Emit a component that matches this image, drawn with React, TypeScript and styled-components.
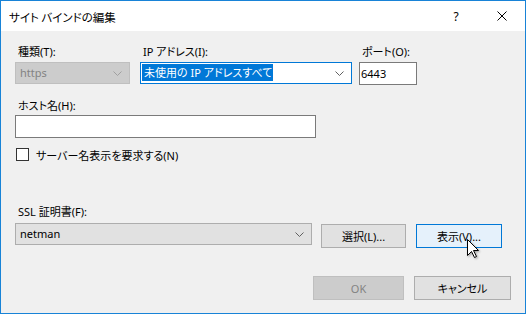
import * as React from "react";
import styled, { createGlobalStyle } from "styled-components";

const GlobalStyle = createGlobalStyle`
	html, body {
		margin: 0;
		padding: 0;
		background: #ffffff;
	}
	body {
		font-family: "Noto Sans", "Noto Sans CJK JP", sans-serif;
		font-size: 11px;
		color: #000;
	}
`;

const Window = styled.div`
	box-sizing: border-box;
	width: 526px;
	height: 314px;
	border: 1px solid #1883d7;
	display: flex;
	flex-direction: column;
	background: #f0f0f0;
`;

const TitleBar = styled.div`
	height: 30px;
	flex: none;
	display: flex;
	align-items: center;
	background: #ffffff;
	padding-left: 8px;
`;

const Title = styled.div`
	flex: 1;
	font-family: "Noto Sans CJK JP", sans-serif;
	font-feature-settings: "palt";
	font-size: 11.5px;
	line-height: 16px;
	padding-top: 1px;
`;

const TitleButton = styled.div`
	width: 46px;
	height: 30px;
	display: flex;
	align-items: center;
	justify-content: center;
	font-family: "Noto Sans", sans-serif;
	font-size: 12px;
`;

const Body = styled.div`
	flex: 1;
	padding: 13px 14px 0 14px;
	display: flex;
	flex-direction: column;
	font-family: "Noto Sans", "Noto Sans CJK JP", sans-serif;
	font-feature-settings: "palt";
	font-size: 11px;
`;

const Row = styled.div<{ $top?: number; $align?: string; $justify?: string; $h?: number }>`
	display: flex;
	margin-top: ${(p) => p.$top || 0}px;
	align-items: ${(p) => p.$align || "flex-start"};
	justify-content: ${(p) => p.$justify || "flex-start"};
	${(p) => (p.$h ? `height: ${p.$h}px;` : "")}
`;

const Field = styled.div<{ $w: number; $mr?: number }>`
	width: ${(p) => p.$w}px;
	margin-right: ${(p) => p.$mr || 0}px;
	display: flex;
	flex-direction: column;
`;

const Label = styled.label<{ $gap?: number }>`
	display: block;
	height: 16px;
	line-height: 16px;
	padding-left: 3px;
	margin-bottom: ${(p) => (p.$gap === undefined ? 2 : p.$gap)}px;
	white-space: nowrap;
`;

const Combo = styled.div<{ $variant?: "disabled" | "focus" | "normal" }>`
	box-sizing: border-box;
	height: 22px;
	display: flex;
	align-items: center;
	padding: 0 7px 0 4px;
	border: 1px solid
		${(p) => (p.$variant === "disabled" ? "#bfbfbf" : p.$variant === "focus" ? "#0078d7" : "#adadad")};
	background: ${(p) => (p.$variant === "disabled" ? "#cccccc" : p.$variant === "focus" ? "#ffffff" : "#e1e1e1")};
	color: ${(p) => (p.$variant === "disabled" ? "#838383" : "#000")};
	${(p) => (p.$variant === "focus" ? "padding-left: 1px;" : "")}
`;

const ComboText = styled.span`
	flex: 1;
	line-height: 16px;
	white-space: nowrap;
`;

const Selected = styled.span`
	background: #0078d7;
	color: #ffffff;
	padding: 1px 1px 1px 2px;
	line-height: 16px;
`;

const TextBox = styled.div<{ $h?: number }>`
	box-sizing: border-box;
	height: ${(p) => p.$h || 23}px;
	border: 1px solid #7a7a7a;
	background: #ffffff;
	padding-left: 1px;
	line-height: ${(p) => (p.$h || 23) - 2}px;
`;

const CheckBox = styled.span`
	box-sizing: border-box;
	width: 13px;
	height: 13px;
	border: 1px solid #333333;
	background: #ffffff;
	margin-left: 1px;
	margin-right: 7px;
`;

const Button = styled.div<{ $w: number; $variant?: "default" | "hot" | "disabled"; $ml?: number; $top?: number }>`
	box-sizing: border-box;
	position: relative;
	width: ${(p) => p.$w}px;
	height: 24px;
	margin-left: ${(p) => p.$ml || 0}px;
	margin-top: ${(p) => p.$top || 0}px;
	display: flex;
	align-items: center;
	justify-content: center;
	border: 1px solid
		${(p) => (p.$variant === "hot" ? "#0078d7" : p.$variant === "disabled" ? "#bfbfbf" : "#adadad")};
	background: ${(p) => (p.$variant === "hot" ? "#e5f1fb" : p.$variant === "disabled" ? "#cccccc" : "#e1e1e1")};
	color: ${(p) => (p.$variant === "disabled" ? "#838383" : "#000")};
	white-space: nowrap;
`;

const Cursor = styled.svg`
	position: absolute;
	left: 50px;
	top: 14px;
	filter: drop-shadow(1px 1px 1px rgba(0, 0, 0, 0.35));
`;

const Chevron: React.FC<{ color?: string }> = ({ color = "#606060" }) => (
	<svg width="9" height="5" viewBox="0 0 9 5">
		<polyline points="0.5,0.5 4.5,4.5 8.5,0.5" fill="none" stroke={color} strokeWidth="1" />
	</svg>
);

const App: React.FC = () => {
	return (
		<>
			<GlobalStyle />
			<Window>
				<TitleBar>
					<Title>サイト バインドの編集</Title>
					<TitleButton>?</TitleButton>
					<TitleButton>
						<svg width="10" height="10" viewBox="0 0 10 10">
							<path d="M0.5 0.5 L9.5 9.5 M9.5 0.5 L0.5 9.5" stroke="#000" strokeWidth="1" />
						</svg>
					</TitleButton>
				</TitleBar>
				<Body>
					<Row>
						<Field $w={115} $mr={10}>
							<Label>種類(T):</Label>
							<Combo $variant="disabled">
								<ComboText>https</ComboText>
								<Chevron color="#a0a0a0" />
							</Combo>
						</Field>
						<Field $w={212} $mr={7}>
							<Label>IP アドレス(I):</Label>
							<Combo $variant="focus">
								<ComboText>
									<Selected>未使用の IP アドレスすべて</Selected>
								</ComboText>
								<Chevron />
							</Combo>
						</Field>
						<Field $w={58}>
							<Label>ポート(O):</Label>
							<TextBox>6443</TextBox>
						</Field>
					</Row>
					<Row $top={13}>
						<Field $w={301}>
							<Label $gap={1}>ホスト名(H):</Label>
							<TextBox />
						</Field>
					</Row>
					<Row $top={9} $align="center" $h={15}>
						<CheckBox />
						<span>サーバー名表示を要求する(N)</span>
					</Row>
					<Row $top={42}>
						<Field $w={297} $mr={9}>
							<Label $gap={3}>SSL 証明書(F):</Label>
							<Combo>
								<ComboText>netman</ComboText>
								<Chevron />
							</Combo>
						</Field>
						<Button $w={85} $top={20}>
							選択(L)...
						</Button>
						<Button $w={86} $ml={10} $top={20} $variant="hot">
							表示(V)...
							<Cursor width="13" height="20" viewBox="0 0 13 20">
								<path
									d="M0.5 0.5 L0.5 16.5 L4.5 12.5 L7.5 18.5 L9.5 17.5 L6.5 11.5 L11.5 11.5 Z"
									fill="#ffffff"
									stroke="#000000"
									strokeWidth="1"
								/>
							</Cursor>
						</Button>
					</Row>
					<Row $top={28} $justify="flex-end">
						<Button $w={91} $variant="disabled">
							OK
						</Button>
						<Button $w={97} $ml={10}>
							キャンセル
						</Button>
					</Row>
				</Body>
			</Window>
		</>
	);
};

export default App;
